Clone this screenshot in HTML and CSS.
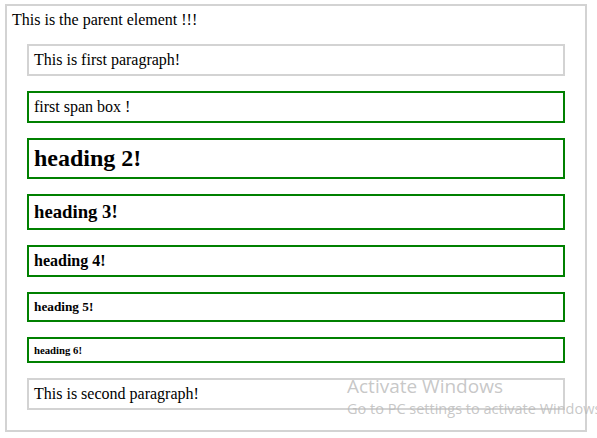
FILE: index.html
```html
<!DOCTYPE html>
<html>
<head>
<meta charset="utf-8">
<link rel="stylesheet" href="styles.css">
</head>
<body>
<div class="parent">
  This is the parent element !!!
  <p class="para">This is first paragraph!</p>
  <span class="box">first span box !</span>
  <h2 class="box">heading 2!</h2>
  <h3 class="box">heading 3!</h3>
  <h4 class="box">heading 4!</h4>
  <h5 class="box">heading 5!</h5>
  <h6 class="box">heading 6!</h6>
  <p class="para">This is second paragraph!</p>
</div>
<div class="watermark">
  <div class="wm-title">Activate Windows</div>
  <div class="wm-sub">Go to PC settings to activate Windows.</div>
</div>
</body>
</html>
```
FILE: styles.css
```css
html, body {
  overflow: hidden;
}
body {
  margin: 4px 10px 4px 5px;
  font-family: "Liberation Serif", "Times New Roman", serif;
  font-size: 16px;
  color: #000;
  background: #fff;
}
.parent {
  border: 2px solid lightgray;
  padding: 5px;
}
.para,
.box {
  display: block;
  margin: 15px;
  padding: 5px;
}
.para {
  border: 2px solid lightgray;
}
.box {
  border: 2px solid green;
}
.watermark {
  position: absolute;
  left: 347px;
  top: 374px;
  white-space: nowrap;
  font-family: "Open Sans", "Noto Sans", sans-serif;
  color: rgba(185, 185, 185, 0.8);
  pointer-events: none;
}
.wm-title {
  font-size: 19px;
  line-height: 25px;
}
.wm-sub {
  font-size: 14.5px;
  line-height: 19px;
}
```
